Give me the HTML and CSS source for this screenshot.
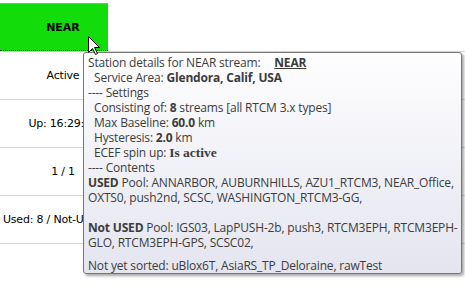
FILE: index.html
```html
<!DOCTYPE html>
<html lang="en">

<head>
  <meta charset="utf-8">
  <title>Stream grid</title>
  <link rel="stylesheet" href="styles.css">
</head>

<body>
  <div class="grid">
    <div class="head">
      <div class="head-cell">NEAR</div>
    </div>
    <div class="row"><div class="clip"><div class="cell">Active</div></div></div>
    <div class="row"><div class="clip"><div class="cell">Up: 16:29:25</div></div></div>
    <div class="row"><div class="clip"><div class="cell">1 / 1</div></div></div>
    <div class="row"><div class="clip"><div class="cell">Used: 8 / Not-Used: 10</div></div></div>
  </div>

  <!-- hover tooltip over the grid -->
  <div class="tip">
    <div>Station details for NEAR stream: <span class="gap"></span><b class="name">NEAR</b></div>
    <div class="ind">Service Area: <b>Glendora, Calif, USA</b></div>
    <div>---- Settings</div>
    <div class="ind">Consisting of: <b>8</b> streams [all RTCM 3.x types]</div>
    <div class="ind">Max Baseline: <b>60.0</b> km</div>
    <div class="ind">Hysteresis: <b>2.0</b> km</div>
    <div class="ind">ECEF spin up: <b class="serif">Is active</b></div>
    <div>---- Contents</div>
    <div><b>USED</b> Pool: ANNARBOR, AUBURNHILLS, AZU1_RTCM3, NEAR_Office,</div>
    <div>OXTS0, push2nd, SCSC, WASHINGTON_RTCM3-GG,</div>
    <div class="blank"></div>
    <div><b>Not USED</b> Pool: IGS03, LapPUSH-2b, push3, RTCM3EPH, RTCM3EPH-</div>
    <div>GLO, RTCM3EPH-GPS, SCSC02,</div>
    <div class="last">Not yet sorted: uBlox6T, AsiaRS_TP_Deloraine, rawTest</div>
  </div>

  <svg class="cursor" width="13" height="20" viewBox="0 0 13 20">
    <path d="M0.5 0.5 L0.5 16.5 L4.5 12.5 L7.5 18.5 L9.5 17.5 L6.5 11.5 L11.5 11.5 Z" fill="#fff" stroke="#000" stroke-width="1" />
  </svg>
</body>

</html>
```

FILE: styles.css
```css
body {
  margin: 0;
  width: 465px;
  height: 285px;
  overflow: hidden;
  background-color: #fff;
  font-family: 'DejaVu Sans', sans-serif;
  font-size: 11px;
  color: #000;
}

.head {
  padding-top: 3px;
  border-bottom: 1px solid #d8d8d8;
}

.head-cell {
  width: 90px;
  height: 46px;
  padding-left: 18px;
  border-top: 1px solid #a0a0a0;
  border-bottom: 1px dotted #000;
  background-color: #12dc0a;
  font-weight: bold;
  display: flex;
  align-items: center;
  justify-content: center;
}

.row {
  height: 47px;
  border-bottom: 1px solid #d8d8d8;
}

/* the tooltip hides the rest of the column */
.clip {
  width: 83px;
  height: 100%;
  overflow: hidden;
}

.cell {
  width: 126px;
  height: 100%;
  display: flex;
  align-items: center;
  justify-content: center;
  white-space: nowrap;
  letter-spacing: -0.2px;
}

.tip {
  position: absolute;
  left: 83px;
  top: 52px;
  width: 373px;
  height: 218px;
  padding: 2px 0 0 4px;
  border: 1px solid #767676;
  border-radius: 3px;
  background: linear-gradient(#fefeff, #e4e5ef);
  box-shadow: 2px 2px 3px rgba(0, 0, 0, 0.35);
  font-family: 'Open Sans', sans-serif;
  font-size: 12px;
  line-height: 15px;
  letter-spacing: -0.18px;
  color: #3c3c3c;
  white-space: nowrap;
}

.tip b {
  font-weight: bold;
}

.ind {
  padding-left: 6px;
}

.gap {
  display: inline-block;
  width: 11px;
}

.name {
  text-decoration: underline;
}

.serif {
  font-family: 'Liberation Serif', serif;
  font-size: 13.5px;
  letter-spacing: 0;
}

.blank {
  height: 15px;
}

.last {
  margin-top: 8px;
}

.cursor {
  position: absolute;
  left: 88px;
  top: 36px;
}
```
